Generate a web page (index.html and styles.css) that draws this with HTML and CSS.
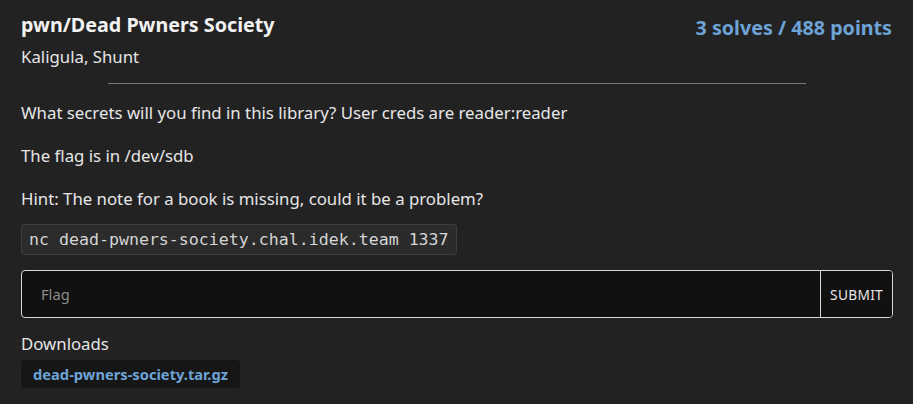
FILE: index.html
```html
<!DOCTYPE html>
<html>
<head>
<meta charset="utf-8">
<link rel="stylesheet" href="styles.css">
</head>
<body>
<div class="challenge">
  <div class="header">
    <div class="heading">
      <h1 class="title">pwn/Dead Pwners Society</h1>
      <div class="authors">Kaligula, Shunt</div>
    </div>
    <div class="score">3 solves / 488 points</div>
  </div>
  <hr class="divider">
  <div class="description">
    <p>What secrets will you find in this library? User creds are reader:reader</p>
    <p>The flag is in /dev/sdb</p>
    <p>Hint: The note for a book is missing, could it be a problem?</p>
    <code class="cmd">nc dead-pwners-society.chal.idek.team 1337</code>
  </div>
  <form class="flag-form">
    <input class="flag-input" type="text" placeholder="Flag">
    <button class="submit" type="button">SUBMIT</button>
  </form>
  <div class="downloads">
    <div class="downloads-label">Downloads</div>
    <a class="file" href="#">dead-pwners-society.tar.gz</a>
  </div>
</div>
</body>
</html>
```

FILE: styles.css
```css
html, body {
  margin: 0;
  padding: 0;
  background: #222222;
}
body {
  font-family: "Noto Sans", sans-serif;
  color: #e6e6e6;
}
.challenge {
  padding: 12px 20px 0 21px;
}
.header {
  display: flex;
  justify-content: space-between;
  align-items: flex-start;
}
.title {
  margin: 0;
  font-size: 19.7px;
  font-weight: 700;
  line-height: 26px;
  color: #f2f2f2;
}
.authors {
  margin-top: 7px;
  font-size: 16.8px;
  line-height: 24px;
  color: #e6e6e6;
}
.score {
  margin-top: 3px;
  margin-right: 1px;
  font-size: 19.7px;
  font-weight: 700;
  line-height: 26px;
  color: #6da3d6;
}
.divider {
  width: 80%;
  margin: 14px auto 16px;
  border: 0;
  border-top: 1px solid #777;
  height: 0;
}
.description p {
  margin: 0 0 18px;
  font-size: 16.8px;
  line-height: 25px;
}
.cmd {
  display: block;
  box-sizing: border-box;
  width: fit-content;
  height: 31px;
  margin-top: -5px;
  padding: 3px 7px;
  background: #2b2b2b;
  border: 1px solid #3d3d3d;
  border-radius: 3px;
  font-family: "DejaVu Sans Mono", monospace;
  font-size: 16.6px;
  line-height: 23px;
  color: #d4d4d4;
}
.flag-form {
  display: flex;
  box-sizing: border-box;
  margin-top: 15px;
  height: 48px;
  border: 1px solid #d8d8d8;
  border-radius: 4px;
  background: #111111;
  overflow: hidden;
}
.flag-input {
  flex: 1;
  border: 0;
  background: transparent;
  padding: 0 19px;
  font-family: "Noto Sans", sans-serif;
  font-size: 14.7px;
  color: #e6e6e6;
  outline: none;
}
.flag-input::placeholder {
  color: #8c8c8c;
}
.submit {
  border: 0;
  border-left: 1px solid #d8d8d8;
  background: #111111;
  color: #e6e6e6;
  font-family: "Noto Sans", sans-serif;
  font-size: 13.7px;
  letter-spacing: 0.3px;
  padding: 0 9px;
}
.downloads {
  margin-top: 14px;
}
.downloads-label {
  font-size: 16.8px;
  line-height: 24px;
}
.file {
  display: inline-block;
  box-sizing: border-box;
  height: 28px;
  margin-top: 4px;
  padding: 3px 12px;
  background: #161616;
  border-radius: 4px;
  color: #6da3d6;
  font-weight: 700;
  font-size: 14.7px;
  line-height: 22px;
  text-decoration: none;
}
```
